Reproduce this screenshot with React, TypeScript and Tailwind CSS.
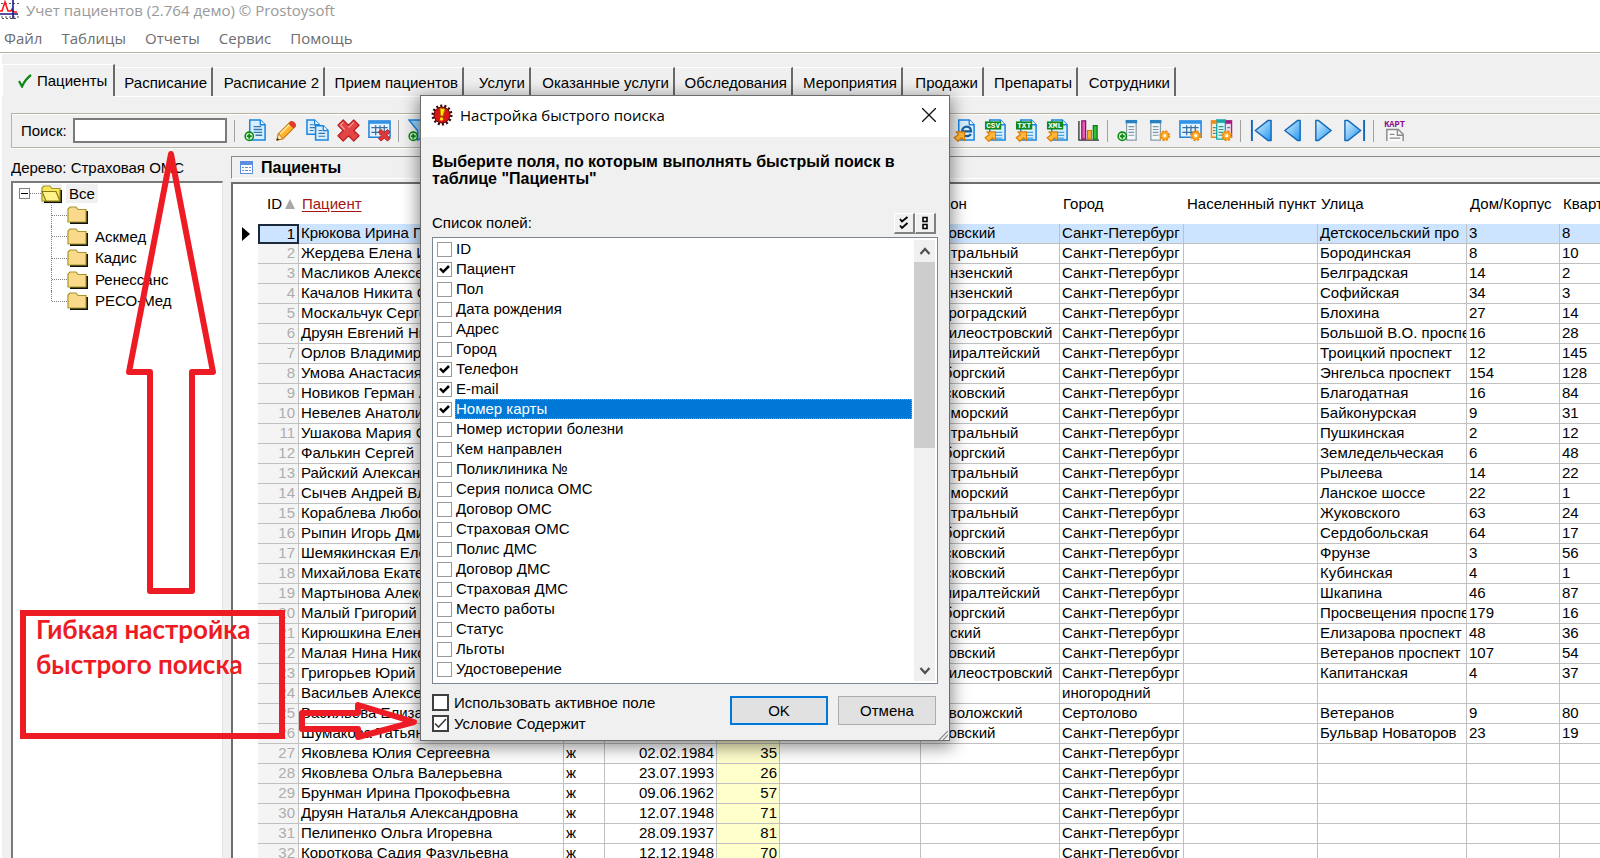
import type { ReactNode } from 'react';

const menu = ['Файл', 'Таблицы', 'Отчеты', 'Сервис', 'Помощь'];

const tabs = [
  { label: 'Расписание', width: 'w-[98px]' },
  { label: 'Расписание 2', width: 'w-[112px]' },
  { label: 'Прием пациентов', width: 'w-[139px]' },
  { label: 'Услуги', width: 'w-[67px]' },
  { label: 'Оказанные услуги', width: 'w-[144px]' },
  { label: 'Обследования', width: 'w-[118px]' },
  { label: 'Мероприятия', width: 'w-[110px]' },
  { label: 'Продажи', width: 'w-[81px]' },
  { label: 'Препараты', width: 'w-[94px]' },
  { label: 'Сотрудники', width: 'w-[98px]' },
];

const folders = ['', 'Аскмед', 'Кадис', 'Ренессанс', 'РЕСО-Мед'];

const fields = [
  'ID', 'Пациент', 'Пол', 'Дата рождения', 'Адрес', 'Город', 'Телефон', 'E-mail', 'Номер карты',
  'Номер истории болезни', 'Кем направлен', 'Поликлиника №', 'Серия полиса ОМС', 'Договор ОМС',
  'Страховая ОМС', 'Полис ДМС', 'Договор ДМС', 'Страховая ДМС', 'Место работы', 'Статус', 'Льготы',
  'Удостоверение',
];
const checkedFields = ['Пациент', 'Телефон', 'E-mail', 'Номер карты'];
const selectedField = 'Номер карты';

const SPB = 'Санкт-Петербург';

// name, sex, birth date, age, region, district, city, street, house, flat
const patients: string[][] = [
  ['Крюкова Ирина П', '', '', '', '', 'Кировский', SPB, 'Детскосельский про', '3', '8'],
  ['Жердева Елена И', '', '', '', '', 'Центральный', SPB, 'Бородинская', '8', '10'],
  ['Масликов Алексей', '', '', '', '', 'Фрунзенский', SPB, 'Белградская', '14', '2'],
  ['Качалов Никита С', '', '', '', '', 'Фрунзенский', SPB, 'Софийская', '34', '3'],
  ['Москальчук Сергей', '', '', '', '', 'Петроградский', SPB, 'Блохина', '27', '14'],
  ['Друян Евгений Ни', '', '', '', '', 'Василеостровский', SPB, 'Большой В.О. проспе', '16', '28'],
  ['Орлов Владимир', '', '', '', '', 'Адмиралтейский', SPB, 'Троицкий проспект', '12', '145'],
  ['Умова Анастасия', '', '', '', '', 'Выборгский', SPB, 'Энгельса проспект', '154', '128'],
  ['Новиков Герман А', '', '', '', '', 'Московский', SPB, 'Благодатная', '16', '84'],
  ['Невелев Анатолий', '', '', '', '', 'Приморский', SPB, 'Байконурская', '9', '31'],
  ['Ушакова Мария С', '', '', '', '', 'Центральный', SPB, 'Пушкинская', '2', '12'],
  ['Фалькин Сергей', '', '', '', '', 'Выборгский', SPB, 'Земледельческая', '6', '48'],
  ['Райский Александр', '', '', '', '', 'Центральный', SPB, 'Рылеева', '14', '22'],
  ['Сычев Андрей Вла', '', '', '', '', 'Приморский', SPB, 'Ланское шоссе', '22', '1'],
  ['Кораблева Любовь', '', '', '', '', 'Центральный', SPB, 'Жуковского', '63', '24'],
  ['Рыпин Игорь Дми', '', '', '', '', 'Выборгский', SPB, 'Сердобольская', '64', '17'],
  ['Шемякинская Елена', '', '', '', '', 'Московский', SPB, 'Фрунзе', '3', '56'],
  ['Михайлова Екатерина', '', '', '', '', 'Московский', SPB, 'Кубинская', '4', '1'],
  ['Мартынова Александра', '', '', '', '', 'Адмиралтейский', SPB, 'Шкапина', '46', '87'],
  ['Малый Григорий', '', '', '', '', 'Выборгский', SPB, 'Просвещения проспе', '179', '16'],
  ['Кирюшкина Елена', '', '', '', '', 'Невский', SPB, 'Елизарова проспект', '48', '36'],
  ['Малая Нина Николаевна', '', '', '', '', 'Кировский', SPB, 'Ветеранов проспект', '107', '54'],
  ['Григорьев Юрий С', '', '', '', '', 'Василеостровский', SPB, 'Капитанская', '4', '37'],
  ['Васильев Алексей', '', '', '', '', '', 'иногородний', '', '', ''],
  ['Васильева Елизавета', '', '', '', '', 'Всеволожский', 'Сертолово', 'Ветеранов', '9', '80'],
  ['Шумакова Татьяна Юрьевна', 'ж', '04.01.1963', '56', SPB, 'Кировский', SPB, 'Бульвар Новаторов', '23', '19'],
  ['Яковлева Юлия Сергеевна', 'ж', '02.02.1984', '35', '', '', SPB, '', '', ''],
  ['Яковлева Ольга Валерьевна', 'ж', '23.07.1993', '26', '', '', SPB, '', '', ''],
  ['Брунман Ирина Прокофьевна', 'ж', '09.06.1962', '57', '', '', SPB, '', '', ''],
  ['Друян Наталья Александровна', 'ж', '12.07.1948', '71', '', '', SPB, '', '', ''],
  ['Пелипенко Ольга Игоревна', 'ж', '28.09.1937', '81', '', '', SPB, '', '', ''],
  ['Короткова Садия Фазульевна', 'ж', '12.12.1948', '70', '', '', SPB, '', '', ''],
];

/* ---------- icons ---------- */

function Svg({ children }: { children: ReactNode }) {
  return <svg viewBox="0 0 24 24" className="w-[23px] h-[23px]" fill="none">{children}</svg>;
}

function Page({ x = 6, y = 1, w = 16, h = 21 }: { x?: number; y?: number; w?: number; h?: number }) {
  return (
    <g>
      <path d={`M${x} ${y}h${w - 5}l5 5v${h - 5}h-${w}z`} fill="#d9efff" stroke="#1b86e0" strokeWidth="1.6" />
      <path d={`M${x + w - 5} ${y}v5h5`} fill="#fff" stroke="#1b86e0" strokeWidth="1.4" />
    </g>
  );
}

const Plus = () => (
  <g>
    <circle cx="5.5" cy="18" r="4.3" fill="#e9ffe9" stroke="#0a8a12" strokeWidth="1.6" />
    <path d="M5.5 15.4v5.2M2.9 18h5.2" stroke="#0a8a12" strokeWidth="2" />
  </g>
);

const Gear = () => (
  <g>
    <circle cx="17.5" cy="17.5" r="4.4" fill="#ffb32e" stroke="#ee8c10" strokeWidth="2.6" strokeDasharray="2.1 1.35" />
    <circle cx="17.5" cy="17.5" r="3.9" fill="#ffb32e" stroke="#ee8c10" />
    <circle cx="17.5" cy="17.5" r="1.5" fill="#fff" />
  </g>
);

const ExportArrow = () => (
  <path d="M3 13.5h9v9l-2.9-2.9-4 3.7-4-3.8 4.6-3.4z" fill="#ffb83d" stroke="#dd7d00" strokeWidth="1.2" strokeLinejoin="round" />
);

const Lines = () => <path d="M10 14h9M10 17h9M12 20h7" stroke="#4aa3dd" strokeWidth="1.3" />;

const Grid = () => (
  <g>
    <path d="M1 2h22v17H1z" fill="#e4f3ff" stroke="#2583da" strokeWidth="1.6" />
    <path d="M1 2h22v3H1z" fill="#2f93ea" />
    <path d="M3.5 9h17M3.5 14h17M8 6.5v10.5M12.5 6.5v10.5M17 6.500v10.5" stroke="#3a6f9c" strokeWidth="1.3" />
  </g>
);

const NewIcon = () => (
  <Svg>
    <Page />
    <path d="M10 8h8M10 11h9M10 14h9M12 17h7" stroke="#3878ac" strokeWidth="1.4" />
    <Plus />
  </Svg>
);

const PencilIcon = () => (
  <Svg>
    <path d="M2 22l1.500-6.500L16.500 2.500l5 5L8.500 20.500z" fill="#ffb42e" stroke="#c47a12" strokeWidth="1.2" strokeLinejoin="round" />
    <path d="M5.500 15.500l12-12" stroke="#ffe28c" strokeWidth="2" />
    <path d="M16.500 2.500c2-2 7 3 5 5l-2.400 2.400-5-5z" fill="#e23b2e" />
    <path d="M2 22l1.500-6.500 5 5z" fill="#ffe6bd" stroke="#c47a12" />
    <path d="M1.500 22.500l.8-3 2.200 2.200z" fill="#333" />
  </Svg>
);

const CopyIcon = () => (
  <Svg>
    <Page x={1} y={1} w={13} h={15} />
    <path d="M4 6h4M4 9h6M4 12h4" stroke="#3878ac" strokeWidth="1.3" />
    <Page x={10} y={7} w={13} h={15} />
    <path d="M13 12h4M13 15h7M13 18h7" stroke="#3878ac" strokeWidth="1.3" />
  </Svg>
);

const DeleteIcon = () => (
  <Svg>
    <path d="M6.500 1L12 6.500 17.500 1 23 6.500 17.500 12l5.500 5.500-5.500 5.500L12 17.500 6.500 23 1 17.500 6.500 12 1 6.500z" fill="#e44444" stroke="#b81d1d" strokeWidth="1.2" strokeLinejoin="round" />
    <path d="M6.500 3.500l-3 3L8 11M17.500 3.500L12 9" stroke="#f79a9a" strokeWidth="1.4" />
  </Svg>
);

const GridDeleteIcon = () => (
  <Svg>
    <Grid />
    <path d="M13.500 11l3.500 3 3.500-3 2.500 2.500-3 3.500 3 3.500-2.500 2.500-3.500-3-3.500 3-2.500-2.500 3-3.500-3-3.500z" fill="#e03838" stroke="#b81d1d" />
  </Svg>
);

const FilterIcon = () => (
  <Svg>
    <path d="M1 1h21l-8 11v8l-4 2V12z" fill="#9ad6fa" stroke="#1b86e0" strokeWidth="1.6" />
    <Plus />
  </Svg>
);

const BrowserIcon = () => (
  <Svg>
    <Page />
    <path d="M9.500 13h9.300c0-3.200-2-5-4.500-5-2.700 0-4.800 2.100-4.800 5s2.100 4.900 4.800 4.900c2 0 3.400-.8 4.200-2.300" stroke="#17609f" strokeWidth="2.4" />
    <ExportArrow />
  </Svg>
);

function ExportIcon({ name }: { name: string }) {
  return (
    <Svg>
      <Page />
      <Lines />
      <path d="M1 2.500h17v8.500H1z" fill="#0d8a1a" />
      <text x="9.500" y="9.500" fontSize="8" fontWeight="700" textAnchor="middle" fill="#fff" fontFamily="Liberation Mono, monospace">{name}</text>
      <ExportArrow />
    </Svg>
  );
}

const ChartIcon = () => (
  <Svg>
    <path d="M2 2v20h21" stroke="#333" strokeWidth="1.4" />
    <path d="M5 2h4v19H5z" fill="#e85bb5" stroke="#8a0f6a" strokeWidth="1.3" />
    <path d="M11 12h4v9h-4z" fill="#ffb52e" stroke="#cc7700" strokeWidth="1.3" />
    <path d="M17 7h4v14h-4z" fill="#35c038" stroke="#0a7a12" strokeWidth="1.3" />
  </Svg>
);

const Column = ({ x }: { x: number }) => (
  <g>
    <path d={`M${x} 2h10v20H${x}z`} fill="#f3f8fb" stroke="#8b9aa5" strokeWidth="1.3" />
    <path d={`M${x - 1} 1h12v3.500H${x - 1}z`} fill="#2b80c4" />
    <path d={`M${x + 2} 8h6M${x + 2} 11h6M${x + 2} 14h6M${x + 2} 17h6`} stroke="#7d96a8" strokeWidth="1.2" />
  </g>
);

const ColumnAddIcon = () => <Svg><Column x={10} /><Plus /></Svg>;
const ColumnSetupIcon = () => <Svg><Column x={3} /><Gear /></Svg>;
const GridSetupIcon = () => <Svg><Grid /><Gear /></Svg>;

const ColorGridIcon = () => (
  <Svg>
    <path d="M1.500 2h6v17h-6z" fill="#ffe9cf" stroke="#f08a1c" strokeWidth="1.4" />
    <path d="M16 2h6.500v17H16z" fill="#f6d9f2" stroke="#a0207c" strokeWidth="1.4" />
    <path d="M7 1h9v20H7z" fill="#cdfaf7" stroke="#14a8a8" strokeWidth="1.4" />
    <path d="M1 1.500h6V5H1z" fill="#f08a1c" /><path d="M16 1.500h7V5h-7z" fill="#a0207c" /><path d="M7 1h9v3H7z" fill="#14a8a8" />
    <path d="M9 8h5M9 11h5M9 14h5M9 17h5M3 9h3M3 12h3M3 15h3M18 9h3" stroke="#4d8a8a" strokeWidth="1.2" />
    <Gear />
  </Svg>
);

function ArrowIcon({ d, bar }: { d: string; bar?: string }) {
  return (
    <Svg>
      <path d={d} fill="url(#blueArrow)" stroke="#1567b8" strokeWidth="1.5" strokeLinejoin="round" />
      {bar && <path d={bar} stroke="#1567b8" strokeWidth="2" />}
    </Svg>
  );
}

const CardIcon = () => (
  <Svg>
    <text x="12" y="8" fontSize="9" fontWeight="700" textAnchor="middle" fill="#8a0a8a" fontFamily="Liberation Mono, monospace">КАРТ</text>
    <path d="M4 23V11h12l5 5v7" fill="#fafafa" stroke="#8a8a8a" strokeWidth="1.5" />
    <path d="M15 11v6h6M7 16h5M7 20h11" stroke="#8a8a8a" strokeWidth="1.4" />
  </Svg>
);

const FolderIcon = ({ open = false }: { open?: boolean }) => (
  <svg viewBox="0 0 21 18" className="w-[21px] h-[18px] shrink-0" fill="none">
    <path d="M3 17h17V5" stroke="#111" strokeWidth="2" />
    <path d="M1 16V3l2-2h6l2 2.500h8V16z" fill={open ? '#f5e85a' : '#fbd98b'} stroke="#a5962a" strokeWidth="1.2" />
    {open && <path d="M1 6.500h14L19 16H5z" fill="#fff48a" stroke="#8a7c10" strokeWidth="1.2" />}
  </svg>
);

const AppIcon = () => (
  <svg viewBox="0 0 20 20" className="w-5 h-5" fill="none">
    <path d="M1 3.500h18M1 17h18M2 18.500h16" stroke="#555" strokeDasharray="2 2" />
    <path d="M0 11h2l3-9 3 9h3l1-2 2 3h3" stroke="#ff1515" strokeWidth="1.6" />
    <path d="M0 14h18M13 0v19" stroke="#1a1a8c" strokeWidth="1.6" />
  </svg>
);

const AlertIcon = () => (
  <svg viewBox="0 0 22 22" className="w-[22px] h-[22px]" fill="none">
    <circle cx="11" cy="11" r="9" stroke="#3a0a0a" strokeWidth="3" strokeDasharray="2 2.040" />
    <circle cx="11" cy="11" r="8" fill="#d81414" stroke="#5a0808" />
    <path d="M9 4l5 1-2 7h-2.500z" fill="#ffe600" stroke="#8a5a00" strokeWidth=".6" />
    <circle cx="10.500" cy="15" r="1.700" fill="#ffe600" />
  </svg>
);

/* ---------- toolbar ---------- */

const Tool = ({ title, children }: { title: string; children: ReactNode }) => (
  <button type="button" aria-label={title} className="w-[31px] shrink-0 flex justify-center">{children}</button>
);

const Separator = () => <span className="w-px h-[22px] ml-[3px] mr-[5px] shrink-0 bg-[#a0a0a0]" />;

function Toolbar() {
  return (
    <div className="mt-4 ml-[9px] h-[35px] shrink-0 flex items-center border border-r-0 border-[#b8b3a3] shadow-[inset_0_1px_0_#fff,0_1px_0_#fff]">
      <svg className="w-0 h-0">
        <linearGradient id="blueArrow" x1="0" y1="0" x2="1" y2="1">
          <stop offset="0" stopColor="#dff3ff" /><stop offset="1" stopColor="#1f97f0" />
        </linearGradient>
      </svg>
      <label htmlFor="search" className="pl-[9px] w-[61px] shrink-0">Поиск:</label>
      <input id="search" type="text" className="w-[154px] h-[25px] mr-1 shrink-0 px-1 bg-white border-2 border-[#7a7a7a] outline-none" />
      <Separator />
      <Tool title="Добавить"><NewIcon /></Tool>
      <Tool title="Изменить"><PencilIcon /></Tool>
      <Tool title="Копировать"><CopyIcon /></Tool>
      <Tool title="Удалить"><DeleteIcon /></Tool>
      <Tool title="Очистить таблицу"><GridDeleteIcon /></Tool>
      <Separator />
      <Tool title="Фильтр"><FilterIcon /></Tool>
      <span className="w-[514px] shrink-0" />
      <Tool title="Экспорт в HTML"><BrowserIcon /></Tool>
      <Tool title="Экспорт в CSV"><ExportIcon name="CSV" /></Tool>
      <Tool title="Экспорт в TXT"><ExportIcon name="TXT" /></Tool>
      <Tool title="Экспорт в XML"><ExportIcon name="XML" /></Tool>
      <Tool title="Диаграмма"><ChartIcon /></Tool>
      <Separator />
      <Tool title="Добавить поле"><ColumnAddIcon /></Tool>
      <Tool title="Свойства поля"><ColumnSetupIcon /></Tool>
      <Tool title="Свойства таблицы"><GridSetupIcon /></Tool>
      <Tool title="Цвета таблицы"><ColorGridIcon /></Tool>
      <Separator />
      <Tool title="Первая"><ArrowIcon d="M22 1.500v21h-3L5.500 12 19 1.500z" bar="M2 1v22" /></Tool>
      <Tool title="Предыдущая"><ArrowIcon d="M20 1.500v21h-2.500L4 12 17.500 1.500z" /></Tool>
      <Tool title="Следующая"><ArrowIcon d="M4 1.500v21h2.500L20 12 6.500 1.500z" /></Tool>
      <Tool title="Последняя"><ArrowIcon d="M2 1.500v21h3L18.500 12 5 1.500z" bar="M22 1v22" /></Tool>
      <Separator />
      <Tool title="Карта"><CardIcon /></Tool>
    </div>
  );
}

/* ---------- tree ---------- */

function Tree() {
  return (
    <div className="flex-1 bg-white border-t-2 border-l-2 border-t-[#7a7a7a] border-l-[#7a7a7a] border-r border-r-[#e3e3e3]">
      <ul className="h-[129px] grid auto-rows-fr pl-[6px]">
        <li className="flex items-center">
          <button type="button" aria-label="Свернуть" className="w-[11px] h-[11px] flex items-center justify-center border border-[#808080]">
            <span className="w-[7px] h-px bg-black" />
          </button>
          <span className="w-[11px] border-t border-dotted border-[#808080]" />
          <span className="bg-[#f0f0f0] h-[20px] flex items-center"><FolderIcon open /></span>
          <span className="ml-1 px-[3px] h-[19px] leading-[19px] bg-[#f0f0f0]">Все</span>
        </li>
        {folders.map((f, i) => (
          <li key={i} className="flex items-center pl-8">
            <span className={i === folders.length - 1 ? 'self-start h-1/2 border-l border-dotted border-[#808080]' : 'self-stretch border-l border-dotted border-[#808080]'} />
            <span className="w-[15px] border-t border-dotted border-[#808080]" />
            <FolderIcon />
            <span className="ml-[7px]">{f}</span>
          </li>
        ))}
      </ul>
    </div>
  );
}

/* ---------- grid ---------- */

const cell = 'h-5 p-0 pl-[2px] leading-[18px] align-top whitespace-nowrap overflow-hidden border-r border-b border-[#c0c0c0] last:border-r-0';

function PatientsGrid() {
  return (
    <div className="flex-1 min-h-0 mt-[3px] overflow-hidden bg-white border-t-2 border-l-2 border-[#6e6e6e]">
      <table className="w-full min-w-[1367px] table-fixed border-separate border-spacing-0">
        <colgroup>
          <col className="w-[25px]" />
          <col className="w-[41px]" />
          <col className="w-[265px]" />
          <col className="w-[41px]" />
          <col className="w-[112px]" />
          <col className="w-[63px]" />
          <col className="w-[141px]" />
          <col className="w-[139px]" />
          <col className="w-[124px]" />
          <col className="w-[134px]" />
          <col className="w-[149px]" />
          <col className="w-[93px]" />
          <col />
        </colgroup>
        <thead>
          <tr className="h-10 text-left whitespace-nowrap [&>th]:p-0 [&>th]:pl-[3px] [&>th]:font-normal [&>th]:overflow-hidden">
            <th />
            <th>
              <span className="flex items-center justify-end gap-[3px] pr-[4px]">
                ID
                <svg viewBox="0 0 10 10" className="w-[10px] h-[10px]"><path d="M5 0l5 10H0z" fill="#a8a8a8" /></svg>
              </span>
            </th>
            <th><a href="#patient" className="text-[#a31515] underline underline-offset-2">Пациент</a></th>
            <th>Пол</th>
            <th>Дата рождения</th>
            <th>Возраст</th>
            <th>Регион</th>
            <th>Район</th>
            <th>Город</th>
            <th>Населенный пункт</th>
            <th>Улица</th>
            <th>Дом/Корпус</th>
            <th>Квартира</th>
          </tr>
        </thead>
        <tbody>
          {patients.map(([name, sex, birth, age, region, district, city, street, house, flat], i) => {
            const first = i === 0;
            return (
              <tr key={i} className={first ? '[&>td+td]:bg-[#cce4ff]' : ''}>
                <td className="h-5 p-0">
                  {first && (
                    <svg viewBox="0 0 8 14" className="w-2 h-[14px] ml-[9px]"><path d="M0 0l8 7-8 7z" fill="#000" /></svg>
                  )}
                </td>
                <td className={first
                  ? 'h-5 p-0 pr-[2px] leading-4 align-top text-right border-2 border-[#1a2a3a]'
                  : 'h-5 p-0 pr-[3px] leading-[18px] align-top text-right text-[#adadad] bg-[#f4f4f4] border-r border-b border-[#c0c0c0]'}
                >
                  {i + 1}
                </td>
                <td className={cell}>{name}</td>
                <td className={cell}>{sex}</td>
                <td className={`${cell} text-right pr-[2px]`}>{birth}</td>
                <td className={`${cell} text-right pr-[2px] bg-[#ffffcc]`}>{age}</td>
                <td className={cell}>{region}</td>
                <td className={cell}>{district}</td>
                <td className={cell}>{city}</td>
                <td className={cell} />
                <td className={cell}>{street}</td>
                <td className={cell}>{house}</td>
                <td className={cell}>{flat}</td>
              </tr>
            );
          })}
        </tbody>
      </table>
    </div>
  );
}

/* ---------- dialog ---------- */

function FieldRow({ name }: { name: string }) {
  const selected = name === selectedField;
  return (
    <li>
      <label className="flex items-center h-5">
        <span className="grid w-[15px] h-[15px] mx-[3px] shrink-0 place-items-center">
          <input type="checkbox" defaultChecked={checkedFields.includes(name)} className="peer appearance-none col-start-1 row-start-1 w-[15px] h-[15px] bg-white border border-[#9a9a9a]" />
          <svg viewBox="0 0 11 11" className="col-start-1 row-start-1 w-[11px] h-[11px] invisible peer-checked:visible pointer-events-none" fill="none">
            <path d="M1 4.500l3.200 3.300L10 2" stroke="#000" strokeWidth="2.500" />
          </svg>
        </span>
        <span className={selected
          ? 'flex-1 h-5 leading-[17px] bg-[#0078d7] text-white border border-dotted border-[#d98b3a]'
          : 'flex-1 h-5 leading-[17px] border border-transparent'}
        >
          {name}
        </span>
      </label>
    </li>
  );
}

function Option({ label, checked = false }: { label: string; checked?: boolean }) {
  return (
    <label className="flex items-center h-[21px]">
      <span className="grid w-[17px] h-[17px] mr-[5px] place-items-center">
        <input type="checkbox" defaultChecked={checked} className="peer appearance-none col-start-1 row-start-1 w-[17px] h-[17px] bg-white border-2 border-[#404040]" />
        <svg viewBox="0 0 13 13" className="col-start-1 row-start-1 w-[13px] h-[13px] invisible peer-checked:visible pointer-events-none" fill="none">
          <path d="M1 6.500l3.500 3.500L12 2" stroke="#404040" strokeWidth="1.600" />
        </svg>
      </span>
      {label}
    </label>
  );
}

function SearchDialog() {
  return (
    <div role="dialog" aria-labelledby="dialog-title" className="absolute left-[420px] top-[95px] w-[530px] flex flex-col bg-[#f0f0f0] border border-[#6b6b6b] shadow-[0_4px_16px_2px_rgba(0,0,0,0.45)]">
      <div className="h-[41px] pb-[3px] flex items-center pl-[10px] pr-[13px] bg-white font-['Open_Sans','Noto_Sans',sans-serif]">
        <AlertIcon />
        <h2 id="dialog-title" className="ml-[7px]">Настройка быстрого поиска</h2>
        <button type="button" aria-label="Закрыть" className="ml-auto">
          <svg viewBox="0 0 14 14" className="w-[14px] h-[14px]" fill="none"><path d="M0 0l14 14M14 0L0 14" stroke="#111" strokeWidth="1.300" /></svg>
        </button>
      </div>

      <div className="px-[11px] pt-4">
        <p className="text-[16px] leading-[17px] font-bold">
          Выберите поля, по которым выполнять быстрый поиск в<br />
          таблице "Пациенты"
        </p>

        <div className="mt-6 h-[24px] flex items-center">
          <span>Список полей:</span>
          <button type="button" aria-label="Отметить все" className="ml-auto w-[21px] h-[21px] flex items-center justify-center border-t border-l border-t-white border-l-white border-r-2 border-b-2 border-r-[#808080] border-b-[#808080]">
            <svg viewBox="0 0 10 14" className="w-[10px] h-[14px]" fill="none"><path d="M1 3l2 2.500L8.500 1M1 9.500L3 12l5.500-5" stroke="#000" strokeWidth="1.800" /></svg>
          </button>
          <button type="button" aria-label="Снять отметки" className="w-[21px] h-[21px] mr-[2px] flex items-center justify-center border-t border-l border-t-white border-l-white border-r-2 border-b-2 border-r-[#808080] border-b-[#808080]">
            <svg viewBox="0 0 8 14" className="w-2 h-[14px]" fill="none"><path d="M2 1.500h4v4H2zM2 8.500h4v4H2z" stroke="#000" strokeWidth="1.600" /></svg>
          </button>
        </div>

        <div className="mt-[2px] p-px flex bg-white border border-[#7b8594]">
          <ul className="flex-1 pb-[3px]">
            {fields.map((f) => <FieldRow key={f} name={f} />)}
          </ul>
          <div className="w-[21px] ml-[2px] mr-px my-px flex flex-col items-center bg-[#f0f0f0]">
            <svg viewBox="0 0 12 22" className="w-3 h-[22px]" fill="none"><path d="M1.500 14L6 9l4.500 5" stroke="#505050" strokeWidth="2.200" /></svg>
            <span className="w-full h-[186px] bg-[#cdcdcd]" />
            <svg viewBox="0 0 12 22" className="w-3 h-[22px] mt-auto" fill="none"><path d="M1.500 9L6 14l4.500-5" stroke="#505050" strokeWidth="2.200" /></svg>
          </div>
        </div>

        <div className="mt-2 flex">
          <div>
            <Option label="Использовать активное поле" />
            <Option label="Условие Содержит" checked />
          </div>
          <div className="ml-auto mr-[2px] mt-1 flex gap-[10px]">
            <button type="button" className="w-[98px] h-[29px] bg-[#e1e1e1] border-2 border-[#0078d7]">OK</button>
            <button type="button" className="w-[98px] h-[29px] bg-[#e1e1e1] border border-[#adadad]">Отмена</button>
          </div>
        </div>
      </div>
      <svg viewBox="0 0 10 10" className="w-[10px] h-[10px] -mt-1 mr-px self-end" fill="none"><path d="M1 10L10 1M5 10l5-5" stroke="#8a8a8a" strokeWidth="1.200" /></svg>
    </div>
  );
}

/* ---------- hints drawn over the window ---------- */

function Hints() {
  return (
    <div className="absolute inset-0 pointer-events-none">
      <svg className="absolute inset-0 w-full h-full" fill="none" stroke="#ed1c24" strokeWidth="6" strokeLinejoin="round">
        <path d="M171 154L213 372H192V591H150V372H129z" />
        <path d="M302 713h56v-8l56 17-56 15v-8h-56z" />
      </svg>
      <div className="absolute left-[20px] top-[610px] w-[265px] h-[129px] pl-[10px] border-6 border-[#ed1c24]">
        <p className="-mt-1 text-[#ed1c24] text-[26px] leading-[35px] font-bold whitespace-nowrap font-['Lato',sans-serif]">
          Гибкая настройка<br />быстрого поиска
        </p>
      </div>
    </div>
  );
}

export default function App() {
  return (
    <div className="relative h-screen overflow-hidden flex flex-col bg-white text-black text-[15px] leading-5 font-['Liberation_Sans',Arial,sans-serif]">
      {/* Title and menu */}
      <header className="shrink-0 border-b border-[#b5b09f] font-['Open_Sans','Noto_Sans',sans-serif]">
        <div className="h-5 flex items-center gap-[6px] text-[#999]">
          <AppIcon />
          <h1>Учет пациентов (2.764 демо) © Prostoysoft</h1>
        </div>
        <nav className="h-8 pl-1 pt-[3px] flex items-center gap-[19px] text-[#6d6d6d]">
          {menu.map((m) => <button key={m} type="button">{m}</button>)}
        </nav>
      </header>

      <main className="flex-1 min-h-0 mt-px flex flex-col border-l-2 border-white bg-[#f0f0f0]">
        {/* Tabs */}
        <div role="tablist" className="mt-[10px] h-[32px] shrink-0 flex items-end">
          <button type="button" role="tab" aria-selected="true" className="w-[113px] h-[32px] shrink-0 flex items-center pl-[15px] border-t border-l border-t-white border-l-white border-r-2 border-r-[#696969]">
            <svg viewBox="0 0 14 14" className="w-[14px] h-[14px] mr-[5px]" fill="none"><path d="M1 7l3 5.500C6 8 9 4 13 1" stroke="#0a8a12" strokeWidth="2.200" /></svg>
            Пациенты
          </button>
          {tabs.map((t) => (
            <button key={t.label} type="button" role="tab" aria-selected="false" className={`${t.width} h-[29px] pt-[2px] shrink-0 pr-1 text-right whitespace-nowrap border-t border-t-white border-r-2 border-r-[#696969]`}>
              {t.label}
            </button>
          ))}
        </div>
        <div className="ml-[113px] h-px shrink-0 bg-white" />

        <Toolbar />

        <div className="flex-1 min-h-0 mt-2 ml-[9px] flex">
          <aside className="w-[212px] shrink-0 flex flex-col">
            <div className="h-[25px] pt-[2px] whitespace-nowrap overflow-hidden">Дерево: Страховая ОМС</div>
            <Tree />
          </aside>
          <section className="flex-1 min-w-0 ml-[8px] flex flex-col">
            <h2 className="h-[23px] shrink-0 flex items-center pl-2 font-bold text-[16px] border border-r-0 border-b-white border-[#8a8a8a]">
              <svg viewBox="0 0 13 13" className="w-[13px] h-[13px] mr-[8px]"><path d="M0 0h13v13H0z" fill="#5b8ede" /><path d="M1 4h11v8H1z" fill="#fff" /><path d="M2 6h2v1H2zM5 6h3v1H5zM9 6h2v1H9zM2 9h2v1H2zM5 9h3v1H5zM9 9h2v1H9z" fill="#5b8ede" /></svg>
              Пациенты
            </h2>
            <PatientsGrid />
          </section>
        </div>
      </main>

      <SearchDialog />
      <Hints />
    </div>
  );
}
